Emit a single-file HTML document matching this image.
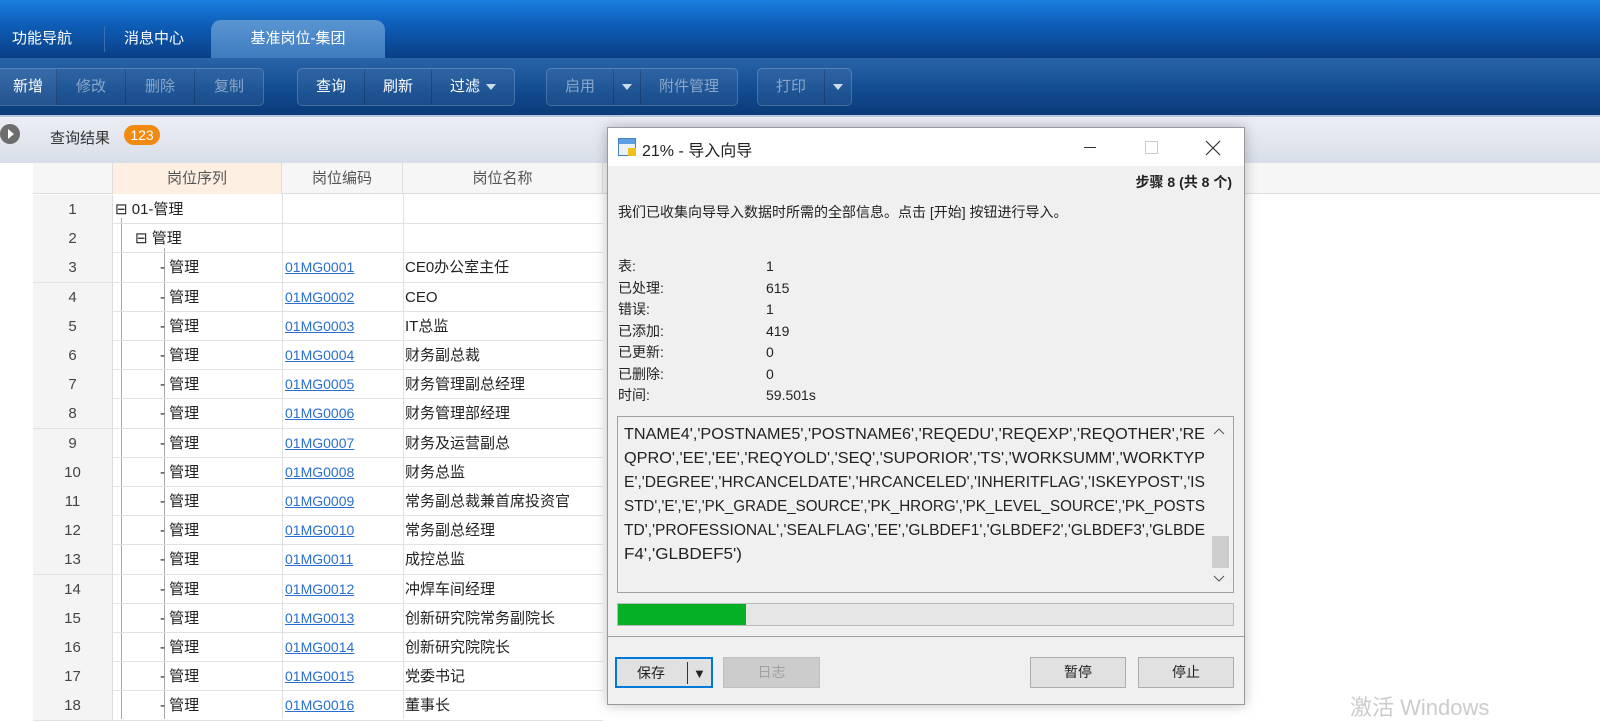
<!DOCTYPE html>
<html><head><meta charset="utf-8"><style>
*{margin:0;padding:0;box-sizing:border-box}
body{width:1600px;height:719px;overflow:hidden;background:#fff;font-family:"Liberation Sans","Noto Sans CJK SC",sans-serif;position:relative;font-size:15px;color:#222}
.abs{position:absolute}
#top{left:0;top:0;width:1600px;height:58px;background:linear-gradient(#1b7fe0 0%,#0d5cb5 45%,#0a3f86 100%)}
.tab{top:20px;height:38px;line-height:38px;color:#fff;font-size:15px}
#tb{left:0;top:58px;width:1600px;height:57px;background:linear-gradient(#2a64a8,#114a8e 60%,#0b3b78)}
.grp{top:68px;height:38px;border:1px solid rgba(255,255,255,.18);border-radius:5px;background:rgba(255,255,255,.06);display:flex}
.grp span{display:block;height:36px;line-height:36px;padding:0 18px;color:#fff;font-size:15px;border-right:1px solid rgba(0,0,0,.2)}
.grp span.d{color:#8aa6c8}
.grp span:last-child{border-right:none}
.tri{display:inline-block;width:0;height:0;border-left:5px solid transparent;border-right:5px solid transparent;border-top:6px solid #cfdcec;vertical-align:middle;margin-left:6px}
#qbar{left:0;top:115px;width:1600px;height:48px;background:linear-gradient(#eceef5,#d8dee8);border-top:2px solid #b8c8dc}
#hdr{left:33px;top:163px;width:1567px;height:31px;background:#f6f6f6;border-bottom:1px solid #ddd}
.th{top:163px;height:31px;line-height:31px;text-align:center;color:#555;border-right:1px solid #ddd}
.row{left:33px;width:570px;height:29.2px;border-bottom:1px solid #e2e2e2}
.c{position:absolute;top:0;height:29px;line-height:29px;font-size:15px}
.num{left:0;width:80px;text-align:center;background:#f4f4f4;color:#444;border-right:1px solid #ddd}
.code{left:252px;color:#2a6fd0;text-decoration:underline;font-size:14px}
.name{left:372px}
#dlg{left:607px;top:127px;width:638px;height:578px;background:#f0f0f0;border:1px solid #9a9a9a;box-shadow:0 0 12px rgba(0,0,0,.25)}
.btn{top:657px;height:31px;border:1px solid #adadad;background:#e1e1e1;text-align:center;line-height:29px;font-size:14px}
</style></head><body>
<div id="top" class="abs"></div>
<div class="abs tab" style="left:12px">功能导航</div>
<div class="abs" style="left:104px;top:26px;width:1px;height:26px;background:#3b6fae"></div>
<div class="abs tab" style="left:124px">消息中心</div>
<div class="abs tab" style="left:211px;width:174px;text-align:center;background:linear-gradient(#5a95d2,#3e7cbf);border-radius:10px 10px 0 0">基准岗位-集团</div>
<div id="tb" class="abs"></div>
<div class="abs grp" style="left:0;border-left:none;border-radius:0 5px 5px 0"><span style="padding:0 13px;background:rgba(255,255,255,.05)">新增</span><span class="d" style="padding:0 19px">修改</span><span class="d" style="padding:0 19px">删除</span><span class="d" style="padding:0 19px">复制</span></div>
<div class="abs grp" style="left:297px"><span>查询</span><span>刷新</span><span>过滤<i class="tri"></i></span></div>
<div class="abs grp" style="left:546px"><span class="d">启用</span><span class="d" style="padding:0 8px"><i class="tri" style="margin:0"></i></span><span class="d">附件管理</span></div>
<div class="abs grp" style="left:757px"><span class="d">打印</span><span class="d" style="padding:0 8px"><i class="tri" style="margin:0"></i></span></div>
<div id="qbar" class="abs"></div>
<div class="abs" style="left:0;top:124px;width:20px;height:20px;border-radius:50%;background:#6d6d6d"></div>
<div class="abs" style="left:8px;top:129px;width:0;height:0;border-top:5px solid transparent;border-bottom:5px solid transparent;border-left:6px solid #fff"></div>
<div class="abs" style="left:50px;top:127px;font-size:15px;color:#333">查询结果</div>
<div class="abs" style="left:124px;top:125px;width:36px;height:20px;border-radius:10px;background:#f08a10;color:#fff;font-size:14px;text-align:center;line-height:20px">123</div>
<div id="hdr" class="abs"></div>
<div class="abs th" style="left:33px;width:80px"></div>
<div class="abs th" style="left:113px;width:169px;background:#fdf0e2">岗位序列</div>
<div class="abs th" style="left:282px;width:121px">岗位编码</div>
<div class="abs th" style="left:403px;width:200px">岗位名称</div>
<div class="abs" style="left:121px;top:218px;width:1px;height:501px;background:#aaa"></div>
<div class="abs" style="left:164px;top:248px;width:1px;height:471px;background:#aaa"></div>
<div class="abs row" style="top:195px"><div class="c num">1</div><div class="c" style="left:82px">⊟ 01-管理</div></div>
<div class="abs row" style="top:224px"><div class="c num">2</div><div class="c" style="left:102px">⊟ 管理</div></div>
<div class="abs row" style="top:253.4px"><div class="c num">3</div><div class="c" style="left:127px">- 管理</div><div class="c code">01MG0001</div><div class="c name">CE0办公室主任</div></div>
<div class="abs row" style="top:282.6px"><div class="c num">4</div><div class="c" style="left:127px">- 管理</div><div class="c code">01MG0002</div><div class="c name">CEO</div></div>
<div class="abs row" style="top:311.8px"><div class="c num">5</div><div class="c" style="left:127px">- 管理</div><div class="c code">01MG0003</div><div class="c name">IT总监</div></div>
<div class="abs row" style="top:341px"><div class="c num">6</div><div class="c" style="left:127px">- 管理</div><div class="c code">01MG0004</div><div class="c name">财务副总裁</div></div>
<div class="abs row" style="top:370.2px"><div class="c num">7</div><div class="c" style="left:127px">- 管理</div><div class="c code">01MG0005</div><div class="c name">财务管理副总经理</div></div>
<div class="abs row" style="top:399.4px"><div class="c num">8</div><div class="c" style="left:127px">- 管理</div><div class="c code">01MG0006</div><div class="c name">财务管理部经理</div></div>
<div class="abs row" style="top:428.6px"><div class="c num">9</div><div class="c" style="left:127px">- 管理</div><div class="c code">01MG0007</div><div class="c name">财务及运营副总</div></div>
<div class="abs row" style="top:457.8px"><div class="c num">10</div><div class="c" style="left:127px">- 管理</div><div class="c code">01MG0008</div><div class="c name">财务总监</div></div>
<div class="abs row" style="top:487px"><div class="c num">11</div><div class="c" style="left:127px">- 管理</div><div class="c code">01MG0009</div><div class="c name">常务副总裁兼首席投资官</div></div>
<div class="abs row" style="top:516.2px"><div class="c num">12</div><div class="c" style="left:127px">- 管理</div><div class="c code">01MG0010</div><div class="c name">常务副总经理</div></div>
<div class="abs row" style="top:545.4px"><div class="c num">13</div><div class="c" style="left:127px">- 管理</div><div class="c code">01MG0011</div><div class="c name">成控总监</div></div>
<div class="abs row" style="top:574.6px"><div class="c num">14</div><div class="c" style="left:127px">- 管理</div><div class="c code">01MG0012</div><div class="c name">冲焊车间经理</div></div>
<div class="abs row" style="top:603.8px"><div class="c num">15</div><div class="c" style="left:127px">- 管理</div><div class="c code">01MG0013</div><div class="c name">创新研究院常务副院长</div></div>
<div class="abs row" style="top:633px"><div class="c num">16</div><div class="c" style="left:127px">- 管理</div><div class="c code">01MG0014</div><div class="c name">创新研究院院长</div></div>
<div class="abs row" style="top:662.2px"><div class="c num">17</div><div class="c" style="left:127px">- 管理</div><div class="c code">01MG0015</div><div class="c name">党委书记</div></div>
<div class="abs row" style="top:691.4px"><div class="c num">18</div><div class="c" style="left:127px">- 管理</div><div class="c code">01MG0016</div><div class="c name">董事长</div></div>
<div class="abs" style="left:282px;top:194px;width:1px;height:525px;background:#e2e2e2"></div>
<div class="abs" style="left:403px;top:194px;width:1px;height:525px;background:#e2e2e2"></div>
<div class="abs" style="left:1350px;top:690px;color:#ccc;font-size:22px">激活 Windows</div>

<div id="dlg" class="abs">
 <div class="abs" style="left:0;top:0;width:636px;height:38px;background:#fff"></div>
 <div class="abs" style="left:10px;top:10px;width:18px;height:18px;background:linear-gradient(#5aa0e0 30%,#e8f0f8 30%);border:1px solid #4a80c0"></div>
 <div class="abs" style="left:20px;top:20px;width:8px;height:8px;background:#f0c020"></div>
 <div class="abs" style="left:34px;top:9px;font-size:16px">21% - 导入向导</div>
 <div class="abs" style="left:476px;top:19px;width:12px;height:1px;background:#333"></div>
 <div class="abs" style="left:537px;top:13px;width:13px;height:13px;border:1px solid #ccc"></div>
 <svg class="abs" style="left:597px;top:12px" width="16" height="16"><path d="M1 1L15 15M15 1L1 15" stroke="#333" stroke-width="1.2"/></svg>
 <div class="abs" style="right:12px;top:44px;font-size:14px;font-weight:bold">步骤 8 (共 8 个)</div>
 <div class="abs" style="left:10px;top:74px;font-size:14px">我们已收集向导导入数据时所需的全部信息。点击 [开始] 按钮进行导入。</div>
 <div class="abs" style="left:10px;top:128px;font-size:14px;line-height:21.5px">表:<br>已处理:<br>错误:<br>已添加:<br>已更新:<br>已删除:<br>时间:</div>
 <div class="abs" style="left:158px;top:128px;font-size:14px;line-height:21.5px">1<br>615<br>1<br>419<br>0<br>0<br>59.501s</div>
 <div class="abs" style="left:9px;top:288px;width:617px;height:177px;border:1px solid #a0a0a0;background:#f0f0f0"></div>
 <svg class="abs" style="left:10px;top:289px" width="600" height="150" font-family="Liberation Sans, sans-serif" font-size="15.5" fill="#222">
  <text x="6" y="22" textLength="581" lengthAdjust="spacingAndGlyphs">TNAME4','POSTNAME5','POSTNAME6','REQEDU','REQEXP','REQOTHER','RE</text>
  <text x="6" y="46" textLength="581" lengthAdjust="spacingAndGlyphs">QPRO','EE','EE','REQYOLD','SEQ','SUPORIOR','TS','WORKSUMM','WORKTYP</text>
  <text x="6" y="70" textLength="581" lengthAdjust="spacingAndGlyphs">E','DEGREE','HRCANCELDATE','HRCANCELED','INHERITFLAG','ISKEYPOST','IS</text>
  <text x="6" y="94" textLength="581" lengthAdjust="spacingAndGlyphs">STD','E','E','PK_GRADE_SOURCE','PK_HRORG','PK_LEVEL_SOURCE','PK_POSTS</text>
  <text x="6" y="118" textLength="581" lengthAdjust="spacingAndGlyphs">TD','PROFESSIONAL','SEALFLAG','EE','GLBDEF1','GLBDEF2','GLBDEF3','GLBDE</text>
  <text x="6" y="142" textLength="118" lengthAdjust="spacingAndGlyphs">F4','GLBDEF5')</text>
 </svg>
 <svg class="abs" style="left:604px;top:298px" width="14" height="10"><path d="M2 8L7 3L12 8" stroke="#555" fill="none"/></svg>
 <div class="abs" style="left:604px;top:408px;width:17px;height:32px;background:#cdcdcd"></div>
 <svg class="abs" style="left:604px;top:446px" width="14" height="10"><path d="M2 2L7 7L12 2" stroke="#555" fill="none"/></svg>
 <div class="abs" style="left:9px;top:475px;width:617px;height:23px;border:1px solid #bcbcbc;background:#e6e6e6"></div>
 <div class="abs" style="left:10px;top:476px;width:128px;height:21px;background:#06b025"></div>
 <div class="abs" style="left:0;top:508px;width:636px;height:1px;background:#a0a0a0"></div>
</div>
<div class="abs btn" style="left:615px;width:98px;border:2px solid #0078d7;text-align:left;padding-left:20px">保存<span style="position:absolute;left:70px;top:3px;width:1px;height:22px;background:#333"></span><span style="position:absolute;left:76px;top:0;font-size:13px">▼</span></div>
<div class="abs btn" style="left:723px;width:97px;color:#a0a0a0;background:#ccc;border-color:#bfbfbf">日志</div>
<div class="abs btn" style="left:1030px;width:96px">暂停</div>
<div class="abs btn" style="left:1138px;width:96px">停止</div>
</body></html>
